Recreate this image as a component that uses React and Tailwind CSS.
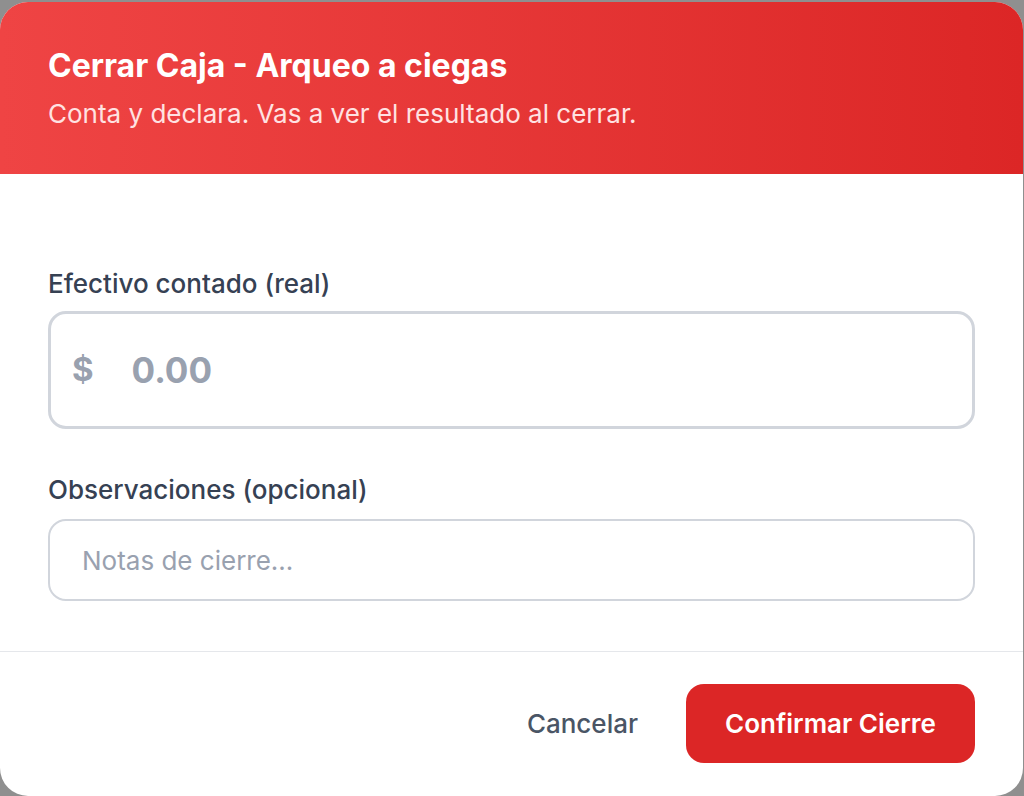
import React, { useState } from 'react';

export default function App() {
    const [efectivo, setEfectivo] = useState('');
    const [notas, setNotas] = useState('');

    return (
        <div className="flex h-screen w-full bg-[#8f8f8f] pt-[2px] pr-[1px] font-['Inter',sans-serif]">
            <div className="flex flex-1 flex-col overflow-hidden rounded-[28px] bg-white">
                <div className="bg-gradient-to-r from-[#ef4444] to-[#dc2626] px-12 pt-[44px] pb-[44px]">
                    <h2 className="text-[32px] font-bold leading-[40px] text-white">Cerrar Caja - Arqueo a ciegas</h2>
                    <p className="mt-[12px] text-[26px] leading-[32px] text-red-100">Conta y declara. Vas a ver el resultado al cerrar.</p>
                </div>

                <form className="px-12 pt-[94px] pb-[50px]" onSubmit={(e) => e.preventDefault()}>
                    <label htmlFor="efectivo" className="mb-[11px] block text-[26px] font-medium leading-[32px] text-gray-700">Efectivo contado (real)</label>
                    <div className="flex h-[118px] items-center rounded-[18px] border-[3px] border-gray-300 pl-[21px]">
                        <span className="text-[33px] font-bold text-gray-400">$</span>
                        <input
                            id="efectivo"
                            type="text"
                            className="ml-[38px] flex-1 bg-transparent text-[35px] font-bold text-gray-700 outline-none placeholder:text-gray-400"
                            placeholder="0.00"
                            value={efectivo}
                            onChange={(e) => setEfectivo(e.target.value)}
                        />
                    </div>

                    <label htmlFor="notas" className="mt-[45px] mb-[13px] block text-[26px] font-medium leading-[32px] text-gray-700">Observaciones (opcional)</label>
                    <input
                        id="notas"
                        type="text"
                        className="block h-[82px] w-full rounded-[18px] border-2 border-gray-300 px-8 text-[26px] text-gray-700 outline-none placeholder:text-gray-400"
                        placeholder="Notas de cierre..."
                        value={notas}
                        onChange={(e) => setNotas(e.target.value)}
                    />
                </form>

                <div className="flex items-center justify-end border-t border-gray-200 px-12 pt-[32px] pb-[33px]">
                    <button type="button" className="mr-[24px] px-6 text-[26px] font-medium text-gray-600">Cancelar</button>
                    <button type="button" className="h-[79px] w-[289px] rounded-[18px] bg-[#dc2626] text-[26px] font-semibold text-white">Confirmar Cierre</button>
                </div>
            </div>
        </div>
    );
}
